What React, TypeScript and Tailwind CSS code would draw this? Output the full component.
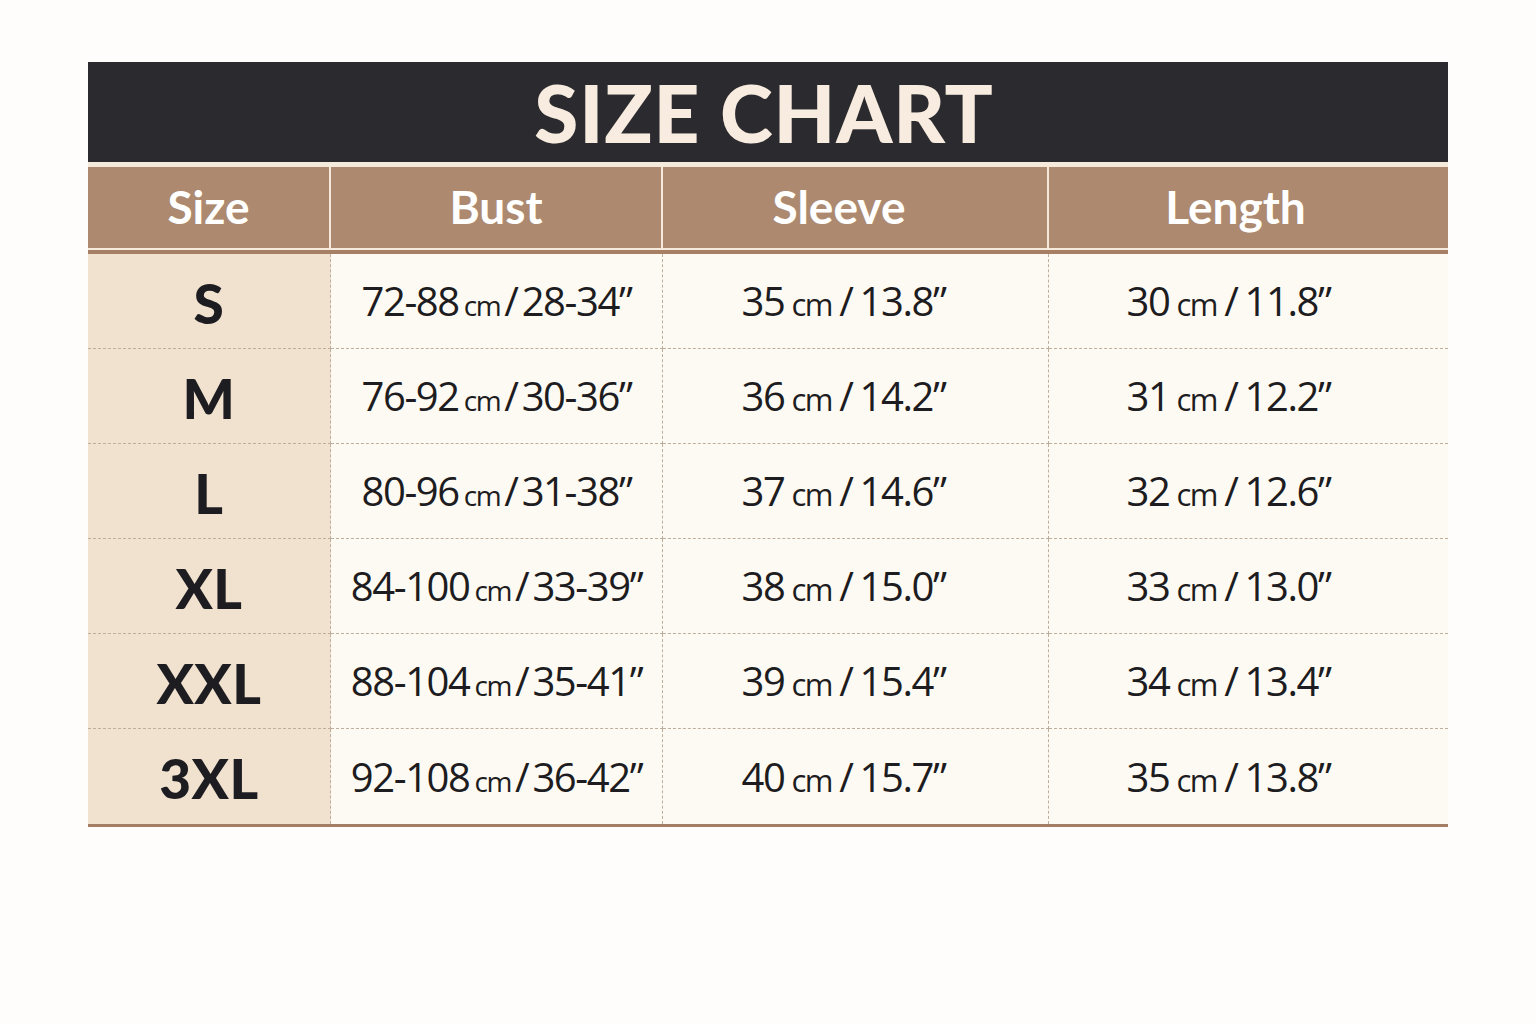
import React from 'react';

const rows = [
  { size: 'S', bust: ['72-88', '28-34'], sleeve: ['35', '13.8'], length: ['30', '11.8'] },
  { size: 'M', bust: ['76-92', '30-36'], sleeve: ['36', '14.2'], length: ['31', '12.2'] },
  { size: 'L', bust: ['80-96', '31-38'], sleeve: ['37', '14.6'], length: ['32', '12.6'] },
  { size: 'XL', bust: ['84-100', '33-39'], sleeve: ['38', '15.0'], length: ['33', '13.0'] },
  { size: 'XXL', bust: ['88-104', '35-41'], sleeve: ['39', '15.4'], length: ['34', '13.4'] },
  { size: '3XL', bust: ['92-108', '36-42'], sleeve: ['40', '15.7'], length: ['35', '13.8'] },
];

function Value({ v, compact }: { v: string[]; compact?: boolean }) {
  return (
    <span className="text-[40px] leading-none text-[#1d1c20] tracking-[-0.035em]">
      {v[0]}
      <span className={compact ? 'text-[28px] ml-[5px]' : 'text-[31px] ml-[7px]'}>cm</span>
      <span className={compact ? 'mx-[4px]' : 'mx-[7px]'}>/</span>
      {v[1]}”
    </span>
  );
}

export default function App() {
  return (
    <div className="min-h-screen w-full bg-[#fefdfb] pt-[62px] font-['Open_Sans',sans-serif]">
      <div className="mx-[88px] w-[1360px]">
        <div className="h-[100px] bg-[#2b2a2f] flex items-center justify-center">
          <h1 className="font-['Lato',sans-serif] font-black text-[80px] leading-none tracking-[0.01em] text-[#f7ecdf] mr-[8px]">
            SIZE CHART
          </h1>
        </div>
        <div className="h-[5px] bg-[#f5eadc]" />
        <div className="grid grid-cols-[243px_332px_386px_399px] h-[81px] bg-[#ad8a6f] font-['Lato',sans-serif] font-bold text-[46px] text-white">
          <div className="flex items-center justify-center border-r-2 border-[#f5e9dc] pb-[2px]">Size</div>
          <div className="flex items-center justify-center border-r-2 border-[#f5e9dc] pb-[2px]">Bust</div>
          <div className="flex items-center justify-center border-r-2 border-[#f5e9dc] pb-[2px] pr-[32px]">Sleeve</div>
          <div className="flex items-center justify-center pb-[2px] pr-[26px]">Length</div>
        </div>
        <div className="h-[2px] bg-[#f5eadc]" />
        <div className="h-[4px] bg-[#a67f65]" />
        <div className="grid grid-cols-[243px_332px_386px_399px]">
          {rows.map((r, i) => {
            const last = i === rows.length - 1;
            const line = last ? '' : ' border-b border-dashed border-[#bfae9c]';
            return (
              <React.Fragment key={r.size}>
                <div className={'h-[95px] bg-[#f1e2cf] flex items-center justify-center border-r border-dashed border-[#bfae9c]' + line}>
                  <span className="font-['Lato',sans-serif] font-black text-[55px] leading-none text-[#1d1c21] tracking-[0.01em] mt-[4px]">
                    {r.size}
                  </span>
                </div>
                <div className={'h-[95px] bg-[#fdfaf4] flex items-center justify-center border-r border-dashed border-[#bfae9c]' + line}>
                  <Value v={r.bust} compact />
                </div>
                <div className={'h-[95px] bg-[#fdfaf4] flex items-center justify-center pr-[24px] border-r border-dashed border-[#bfae9c]' + line}>
                  <Value v={r.sleeve} />
                </div>
                <div className={'h-[95px] bg-[#fdfaf4] flex items-center justify-center pr-[40px]' + line}>
                  <Value v={r.length} />
                </div>
              </React.Fragment>
            );
          })}
        </div>
        <div className="h-[3px] bg-[#a47e64]" />
      </div>
    </div>
  );
}
